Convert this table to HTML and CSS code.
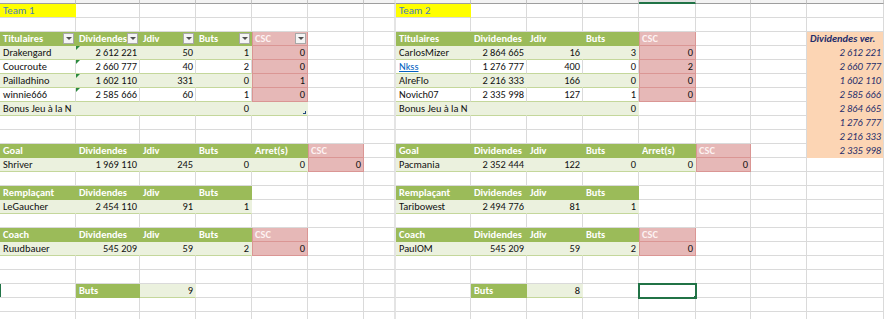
FILE: index.html
```html
<!DOCTYPE html>
<html lang="fr">
<head>
<meta charset="utf-8">
<title>Équipes</title>
<link rel="stylesheet" href="styles.css">
</head>
<body>
<div class="sheet">
<!-- column header strip -->
<div class="c hd"></div><div class="c hd"></div><div class="c hd"></div><div class="c hd"></div><div class="c hd"></div><div class="c hd"></div><div class="c hd"></div><div class="c hd"></div><div class="c hd"></div><div class="c hd"></div><div class="c hd"></div><div class="c hd cs"></div><div class="c hd"></div><div class="c hd"></div><div class="c hd"></div>
<!-- row 1 -->
<div class="c y">Team 1</div><div class="c"></div><div class="c"></div><div class="c"></div><div class="c"></div><div class="c"></div><div class="c"></div><div class="c y">Team 2</div><div class="c"></div><div class="c"></div><div class="c"></div><div class="c"></div><div class="c"></div><div class="c"></div><div class="c"></div>
<!-- row 2 -->
<div class="c"></div><div class="c"></div><div class="c"></div><div class="c"></div><div class="c"></div><div class="c"></div><div class="c"></div><div class="c"></div><div class="c"></div><div class="c"></div><div class="c"></div><div class="c"></div><div class="c"></div><div class="c"></div><div class="c"></div>
<!-- row 3 -->
<div class="c h f"><span>Titulaires</span><span class="fb"></span></div><div class="c h f"><span>Dividendes</span><span class="fb"></span></div><div class="c h f"><span>Jdiv</span><span class="fb"></span></div><div class="c h f"><span>Buts</span><span class="fb"></span></div><div class="c p ph f"><span>CSC</span><span class="fb"></span></div><div class="c"></div><div class="c"></div><div class="c h">Titulaires</div><div class="c h">Dividendes</div><div class="c h">Jdiv</div><div class="c h">Buts</div><div class="c p ph">CSC</div><div class="c"></div><div class="c"></div><div class="c o oh">Dividendes ver.</div>
<!-- row 4 -->
<div class="c b">Drakengard</div><div class="c b r err">2 612 221</div><div class="c b r">50</div><div class="c b r">1</div><div class="c p r">0</div><div class="c"></div><div class="c"></div><div class="c b">CarlosMizer</div><div class="c b r">2 864 665</div><div class="c b r">16</div><div class="c b r">3</div><div class="c p r">0</div><div class="c"></div><div class="c"></div><div class="c o">2 612 221</div>
<!-- row 5 -->
<div class="c w">Coucroute</div><div class="c w r err">2 660 777</div><div class="c w r">40</div><div class="c w r">2</div><div class="c p r">0</div><div class="c"></div><div class="c"></div><div class="c w"><span class="lk">Nkss</span></div><div class="c w r">1 276 777</div><div class="c w r">400</div><div class="c w r">0</div><div class="c p r">2</div><div class="c"></div><div class="c"></div><div class="c o">2 660 777</div>
<!-- row 6 -->
<div class="c b">Pailladhino</div><div class="c b r err">1 602 110</div><div class="c b r">331</div><div class="c b r">0</div><div class="c p r">1</div><div class="c"></div><div class="c"></div><div class="c b">AlreFlo</div><div class="c b r">2 216 333</div><div class="c b r">166</div><div class="c b r">0</div><div class="c p r">0</div><div class="c"></div><div class="c"></div><div class="c o">1 602 110</div>
<!-- row 7 -->
<div class="c w">winnie666</div><div class="c w r err">2 585 666</div><div class="c w r">60</div><div class="c w r">1</div><div class="c p r">0</div><div class="c"></div><div class="c"></div><div class="c w">Novich07</div><div class="c w r">2 335 998</div><div class="c w r">127</div><div class="c w r">1</div><div class="c p r">0</div><div class="c"></div><div class="c"></div><div class="c o">2 585 666</div>
<!-- row 8 -->
<div class="c b">Bonus Jeu à la N</div><div class="c b"></div><div class="c b"></div><div class="c b r">0</div><div class="c b rz"></div><div class="c"></div><div class="c"></div><div class="c b">Bonus Jeu à la N</div><div class="c b"></div><div class="c b"></div><div class="c b r">0</div><div class="c"></div><div class="c"></div><div class="c"></div><div class="c o">2 864 665</div>
<!-- row 9 -->
<div class="c"></div><div class="c"></div><div class="c"></div><div class="c"></div><div class="c"></div><div class="c"></div><div class="c"></div><div class="c"></div><div class="c"></div><div class="c"></div><div class="c"></div><div class="c"></div><div class="c"></div><div class="c"></div><div class="c o">1 276 777</div>
<!-- row 10 -->
<div class="c"></div><div class="c"></div><div class="c"></div><div class="c"></div><div class="c"></div><div class="c"></div><div class="c"></div><div class="c"></div><div class="c"></div><div class="c"></div><div class="c"></div><div class="c"></div><div class="c"></div><div class="c"></div><div class="c o">2 216 333</div>
<!-- row 11 -->
<div class="c h">Goal</div><div class="c h">Dividendes</div><div class="c h">Jdiv</div><div class="c h">Buts</div><div class="c h">Arret(s)</div><div class="c p ph">CSC</div><div class="c"></div><div class="c h">Goal</div><div class="c h">Dividendes</div><div class="c h">Jdiv</div><div class="c h">Buts</div><div class="c h">Arret(s)</div><div class="c p ph">CSC</div><div class="c"></div><div class="c o">2 335 998</div>
<!-- row 12 -->
<div class="c b">Shriver</div><div class="c b r">1 969 110</div><div class="c b r">245</div><div class="c b r">0</div><div class="c b r">0</div><div class="c p r">0</div><div class="c"></div><div class="c b">Pacmania</div><div class="c b r">2 352 444</div><div class="c b r">122</div><div class="c b r">0</div><div class="c b r">0</div><div class="c p r">0</div><div class="c"></div><div class="c"></div>
<!-- row 13 -->
<div class="c"></div><div class="c"></div><div class="c"></div><div class="c"></div><div class="c"></div><div class="c"></div><div class="c"></div><div class="c"></div><div class="c"></div><div class="c"></div><div class="c"></div><div class="c"></div><div class="c"></div><div class="c"></div><div class="c"></div>
<!-- row 14 -->
<div class="c h">Remplaçant</div><div class="c h">Dividendes</div><div class="c h">Jdiv</div><div class="c h">Buts</div><div class="c"></div><div class="c"></div><div class="c"></div><div class="c h">Remplaçant</div><div class="c h">Dividendes</div><div class="c h">Jdiv</div><div class="c h">Buts</div><div class="c"></div><div class="c"></div><div class="c"></div><div class="c"></div>
<!-- row 15 -->
<div class="c b">LeGaucher</div><div class="c b r">2 454 110</div><div class="c b r">91</div><div class="c b r">1</div><div class="c"></div><div class="c"></div><div class="c"></div><div class="c b">Taribowest</div><div class="c b r">2 494 776</div><div class="c b r">81</div><div class="c b r">1</div><div class="c"></div><div class="c"></div><div class="c"></div><div class="c"></div>
<!-- row 16 -->
<div class="c"></div><div class="c"></div><div class="c"></div><div class="c"></div><div class="c"></div><div class="c"></div><div class="c"></div><div class="c"></div><div class="c"></div><div class="c"></div><div class="c"></div><div class="c"></div><div class="c"></div><div class="c"></div><div class="c"></div>
<!-- row 17 -->
<div class="c h">Coach</div><div class="c h">Dividendes</div><div class="c h">Jdiv</div><div class="c h">Buts</div><div class="c p ph">CSC</div><div class="c"></div><div class="c"></div><div class="c h">Coach</div><div class="c h">Dividendes</div><div class="c h">Jdiv</div><div class="c h">Buts</div><div class="c p ph">CSC</div><div class="c"></div><div class="c"></div><div class="c"></div>
<!-- row 18 -->
<div class="c b">Ruudbauer</div><div class="c b r">545 209</div><div class="c b r">59</div><div class="c b r">2</div><div class="c p r">0</div><div class="c"></div><div class="c"></div><div class="c b">PaulOM</div><div class="c b r">545 209</div><div class="c b r">59</div><div class="c b r">2</div><div class="c p r">0</div><div class="c"></div><div class="c"></div><div class="c"></div>
<!-- row 19 -->
<div class="c"></div><div class="c"></div><div class="c"></div><div class="c"></div><div class="c"></div><div class="c"></div><div class="c"></div><div class="c"></div><div class="c"></div><div class="c"></div><div class="c"></div><div class="c"></div><div class="c"></div><div class="c"></div><div class="c"></div>
<!-- row 20 -->
<div class="c"></div><div class="c"></div><div class="c"></div><div class="c"></div><div class="c"></div><div class="c"></div><div class="c"></div><div class="c"></div><div class="c"></div><div class="c"></div><div class="c"></div><div class="c"></div><div class="c"></div><div class="c"></div><div class="c"></div>
<!-- row 21 -->
<div class="c rsel"></div><div class="c h">Buts</div><div class="c b r">9</div><div class="c"></div><div class="c"></div><div class="c"></div><div class="c"></div><div class="c"></div><div class="c h">Buts</div><div class="c b r">8</div><div class="c"></div><div class="c sel"></div><div class="c"></div><div class="c"></div><div class="c"></div>
<!-- row 22 -->
<div class="c"></div><div class="c"></div><div class="c"></div><div class="c"></div><div class="c"></div><div class="c"></div><div class="c"></div><div class="c"></div><div class="c"></div><div class="c"></div><div class="c"></div><div class="c"></div><div class="c"></div><div class="c"></div><div class="c"></div>
<!-- row 23 -->
<div class="c"></div><div class="c"></div><div class="c"></div><div class="c"></div><div class="c"></div><div class="c"></div><div class="c"></div><div class="c"></div><div class="c"></div><div class="c"></div><div class="c"></div><div class="c"></div><div class="c"></div><div class="c"></div><div class="c"></div>
</div>
</body>
</html>
```

FILE: styles.css
```css
html, body {
  margin: 0;
  padding: 0;
}
body {
  width: 884px;
  height: 319px;
  overflow: hidden;
  background: #ffffff;
  font-family: Carlito, Calibri, "Liberation Sans", sans-serif;
  font-size: 10.4px;
  color: #111111;
}
.sheet {
  display: grid;
  grid-template-columns: 76px 64px 56px 56px 56px 56px 32px 75px 56px 56px 56px 57px 55px 56px 77px;
  grid-template-rows: 4px;
  grid-auto-rows: 14px;
}
.c {
  box-sizing: border-box;
  border-right: 1px solid #dadada;
  border-bottom: 1px solid #dadada;
  padding: 0 2px 0 3px;
  line-height: 13px;
  white-space: nowrap;
  overflow: hidden;
}
.sheet > :nth-child(15n+7) {
  border-right: 2px solid #e4e4e4;
}
.hd {
  background: #f3f3f3;
  border-right-color: #c6c6c6;
  border-bottom-color: #9e9e9e;
  padding: 0;
}
.hd.cs {
  background: #e1e1e1;
  border-bottom: 2px solid #217346;
}
.y {
  background: #ffff00;
  border-right-color: #ffff00;
  color: #4a7ebb;
  font-size: 10.8px;
}
.h {
  background: #9bbb59;
  border-right-color: #9bbb59;
  border-bottom-color: #9bbb59;
  color: #ffffff;
  font-weight: bold;
}
.b {
  background: #ebf1de;
  border-right-color: #ebf1de;
  border-bottom-color: #c4d79b;
}
.w {
  border-bottom-color: #c4d79b;
}
.p {
  background: #e6b8b7;
  border-right-color: #da9694;
  border-bottom-color: #da9694;
  box-shadow: inset 1px 0 #da9694;
}
.ph {
  color: #fdf2f2;
  font-weight: bold;
}
.r {
  text-align: right;
}
.f {
  display: flex;
  justify-content: space-between;
  align-items: center;
  padding-right: 1px;
}
.fb {
  box-sizing: border-box;
  width: 11px;
  height: 11px;
  flex: none;
  border: 1px solid #a8a8a8;
  background: #f4f4f4;
  display: flex;
  align-items: center;
  justify-content: center;
}
.fb::after {
  content: "";
  border-top: 3px solid #505050;
  border-left: 3px solid transparent;
  border-right: 3px solid transparent;
}
.err {
  position: relative;
}
.err::before {
  content: "";
  position: absolute;
  left: 0;
  top: 0;
  border-top: 4px solid #2b8a3e;
  border-right: 4px solid transparent;
}
.rz {
  position: relative;
}
.rz::after {
  content: "";
  position: absolute;
  right: 1px;
  bottom: 1px;
  width: 3px;
  height: 3px;
  border-right: 1px solid #1f497d;
  border-bottom: 1px solid #1f497d;
  box-sizing: border-box;
}
.lk {
  color: #0563c1;
  text-decoration: underline;
}
.o {
  background: #fcd5b4;
  border-bottom-color: #fcd5b4;
  color: #1f2d6b;
  font-style: italic;
  text-align: right;
}
.oh {
  font-weight: bold;
  text-align: left;
}
.rsel {
  box-shadow: inset 1px 0 #217346;
}
.sel {
  position: relative;
  outline: 2px solid #217346;
  outline-offset: -1px;
}
.sel::after {
  content: "";
  position: absolute;
  right: -3px;
  bottom: -3px;
  width: 5px;
  height: 5px;
  box-sizing: border-box;
  background: #217346;
  border: 1px solid #ffffff;
}
```
